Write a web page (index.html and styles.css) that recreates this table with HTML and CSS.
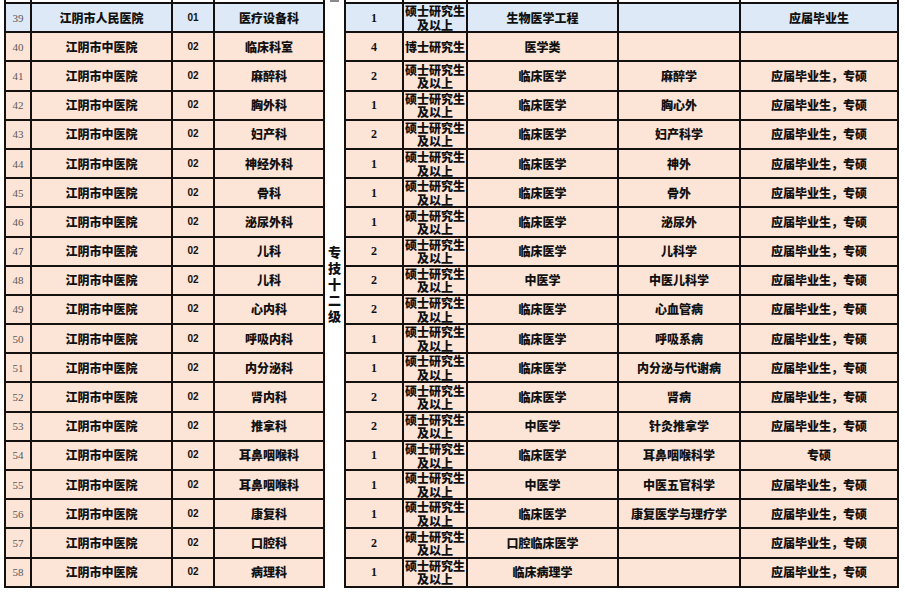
FILE: index.html
```html
<!DOCTYPE html>
<html lang="zh">
<head>
<meta charset="utf-8">
<title>招聘岗位表</title>
<link rel="stylesheet" href="styles.css">
</head>
<body>
<table class="sheet">
  <colgroup>
    <col class="c-no"><col class="c-hosp"><col class="c-code"><col class="c-dept">
    <col class="c-gap">
    <col class="c-num"><col class="c-edu"><col class="c-major"><col class="c-dir"><col class="c-note">
  </colgroup>
  <tbody>
    <tr class="partial">
      <td></td><td></td><td></td><td></td>
      <td class="gap" rowspan="21"><div class="gap-mark"></div><div class="vtext">专技十二级</div></td>
      <td></td><td></td><td></td><td></td><td></td>
    </tr>
    <tr class="blue">
      <td class="no">39</td><td>江阴市人民医院</td><td class="code">01</td><td>医疗设备科</td>
      <td class="num">1</td><td class="edu"><div class="two">硕士研究生<br>及以上</div></td><td>生物医学工程</td><td></td><td>应届毕业生</td>
    </tr>
    <tr>
      <td class="no">40</td><td>江阴市中医院</td><td class="code">02</td><td>临床科室</td>
      <td class="num">4</td><td>博士研究生</td><td>医学类</td><td></td><td></td>
    </tr>
    <tr>
      <td class="no">41</td><td>江阴市中医院</td><td class="code">02</td><td>麻醉科</td>
      <td class="num">2</td><td class="edu"><div class="two">硕士研究生<br>及以上</div></td><td>临床医学</td><td>麻醉学</td><td>应届毕业生，专硕</td>
    </tr>
    <tr>
      <td class="no">42</td><td>江阴市中医院</td><td class="code">02</td><td>胸外科</td>
      <td class="num">1</td><td class="edu"><div class="two">硕士研究生<br>及以上</div></td><td>临床医学</td><td>胸心外</td><td>应届毕业生，专硕</td>
    </tr>
    <tr>
      <td class="no">43</td><td>江阴市中医院</td><td class="code">02</td><td>妇产科</td>
      <td class="num">2</td><td class="edu"><div class="two">硕士研究生<br>及以上</div></td><td>临床医学</td><td>妇产科学</td><td>应届毕业生，专硕</td>
    </tr>
    <tr>
      <td class="no">44</td><td>江阴市中医院</td><td class="code">02</td><td>神经外科</td>
      <td class="num">1</td><td class="edu"><div class="two">硕士研究生<br>及以上</div></td><td>临床医学</td><td>神外</td><td>应届毕业生，专硕</td>
    </tr>
    <tr>
      <td class="no">45</td><td>江阴市中医院</td><td class="code">02</td><td>骨科</td>
      <td class="num">1</td><td class="edu"><div class="two">硕士研究生<br>及以上</div></td><td>临床医学</td><td>骨外</td><td>应届毕业生，专硕</td>
    </tr>
    <tr>
      <td class="no">46</td><td>江阴市中医院</td><td class="code">02</td><td>泌尿外科</td>
      <td class="num">1</td><td class="edu"><div class="two">硕士研究生<br>及以上</div></td><td>临床医学</td><td>泌尿外</td><td>应届毕业生，专硕</td>
    </tr>
    <tr>
      <td class="no">47</td><td>江阴市中医院</td><td class="code">02</td><td>儿科</td>
      <td class="num">2</td><td class="edu"><div class="two">硕士研究生<br>及以上</div></td><td>临床医学</td><td>儿科学</td><td>应届毕业生，专硕</td>
    </tr>
    <tr>
      <td class="no">48</td><td>江阴市中医院</td><td class="code">02</td><td>儿科</td>
      <td class="num">2</td><td class="edu"><div class="two">硕士研究生<br>及以上</div></td><td>中医学</td><td>中医儿科学</td><td>应届毕业生，专硕</td>
    </tr>
    <tr>
      <td class="no">49</td><td>江阴市中医院</td><td class="code">02</td><td>心内科</td>
      <td class="num">2</td><td class="edu"><div class="two">硕士研究生<br>及以上</div></td><td>临床医学</td><td>心血管病</td><td>应届毕业生，专硕</td>
    </tr>
    <tr>
      <td class="no">50</td><td>江阴市中医院</td><td class="code">02</td><td>呼吸内科</td>
      <td class="num">1</td><td class="edu"><div class="two">硕士研究生<br>及以上</div></td><td>临床医学</td><td>呼吸系病</td><td>应届毕业生，专硕</td>
    </tr>
    <tr>
      <td class="no">51</td><td>江阴市中医院</td><td class="code">02</td><td>内分泌科</td>
      <td class="num">1</td><td class="edu"><div class="two">硕士研究生<br>及以上</div></td><td>临床医学</td><td>内分泌与代谢病</td><td>应届毕业生，专硕</td>
    </tr>
    <tr>
      <td class="no">52</td><td>江阴市中医院</td><td class="code">02</td><td>肾内科</td>
      <td class="num">2</td><td class="edu"><div class="two">硕士研究生<br>及以上</div></td><td>临床医学</td><td>肾病</td><td>应届毕业生，专硕</td>
    </tr>
    <tr>
      <td class="no">53</td><td>江阴市中医院</td><td class="code">02</td><td>推拿科</td>
      <td class="num">2</td><td class="edu"><div class="two">硕士研究生<br>及以上</div></td><td>中医学</td><td>针灸推拿学</td><td>应届毕业生，专硕</td>
    </tr>
    <tr>
      <td class="no">54</td><td>江阴市中医院</td><td class="code">02</td><td>耳鼻咽喉科</td>
      <td class="num">1</td><td class="edu"><div class="two">硕士研究生<br>及以上</div></td><td>临床医学</td><td>耳鼻咽喉科学</td><td>专硕</td>
    </tr>
    <tr>
      <td class="no">55</td><td>江阴市中医院</td><td class="code">02</td><td>耳鼻咽喉科</td>
      <td class="num">1</td><td class="edu"><div class="two">硕士研究生<br>及以上</div></td><td>中医学</td><td>中医五官科学</td><td>应届毕业生，专硕</td>
    </tr>
    <tr>
      <td class="no">56</td><td>江阴市中医院</td><td class="code">02</td><td>康复科</td>
      <td class="num">1</td><td class="edu"><div class="two">硕士研究生<br>及以上</div></td><td>临床医学</td><td>康复医学与理疗学</td><td>应届毕业生，专硕</td>
    </tr>
    <tr>
      <td class="no">57</td><td>江阴市中医院</td><td class="code">02</td><td>口腔科</td>
      <td class="num">2</td><td class="edu"><div class="two">硕士研究生<br>及以上</div></td><td>口腔临床医学</td><td></td><td>应届毕业生，专硕</td>
    </tr>
    <tr>
      <td class="no">58</td><td>江阴市中医院</td><td class="code">02</td><td>病理科</td>
      <td class="num">1</td><td class="edu"><div class="two">硕士研究生<br>及以上</div></td><td>临床病理学</td><td></td><td>应届毕业生，专硕</td>
    </tr>
  </tbody>
</table>
</body>
</html>
```

FILE: styles.css
```css
html, body {
  margin: 0;
  padding: 0;
  background: #ffffff;
}

body {
  font-family: "Noto Sans CJK SC", "Liberation Sans", sans-serif;
  color: #111;
}

.sheet {
  border-collapse: collapse;
  table-layout: fixed;
  width: 895px;
  margin-left: 4px;
}

.c-no { width: 26px; }
.c-hosp { width: 141px; }
.c-code { width: 42px; }
.c-dept { width: 110px; }
.c-gap { width: 21px; }
.c-num { width: 58px; }
.c-edu { width: 64px; }
.c-major { width: 151px; }
.c-dir { width: 122px; }
.c-note { width: 158px; }

.sheet td {
  border: 2px solid #141010;
  padding: 0;
  height: 27.2px;
  text-align: center;
  vertical-align: middle;
  font-size: 12px;
  font-weight: 900;
  line-height: 14px;
  white-space: nowrap;
  background: #fce4d6;
}

.sheet tr.blue td {
  background: #dde9f6;
}

.sheet tr.partial td {
  height: 2px;
  border-top: 0 none;
  background: #ffffff;
}

.sheet td.gap {
  background: #ffffff;
  border-top: 0 none;
  border-bottom: 0 none;
  vertical-align: top;
}

.gap-mark {
  width: 9px;
  height: 2px;
  margin: 0 auto;
  background: #8a8a8a;
}

.vtext {
  writing-mode: vertical-rl;
  text-orientation: upright;
  font-size: 13px;
  line-height: 13px;
  letter-spacing: 3px;
  font-weight: 900;
  margin: 244px auto 0;
  color: #111;
}

.sheet td.no {
  font-family: "Liberation Serif", serif;
  font-weight: 400;
  font-size: 11px;
  color: #5a5a5a;
}

.sheet td.code {
  font-family: "Liberation Sans", sans-serif;
  font-size: 10px;
  font-weight: 700;
}

.sheet td.num {
  font-family: "Liberation Serif", serif;
  font-size: 12px;
  font-weight: 700;
}

.sheet td.edu {
  vertical-align: bottom;
}

.two {
  line-height: 13.5px;
}
```
